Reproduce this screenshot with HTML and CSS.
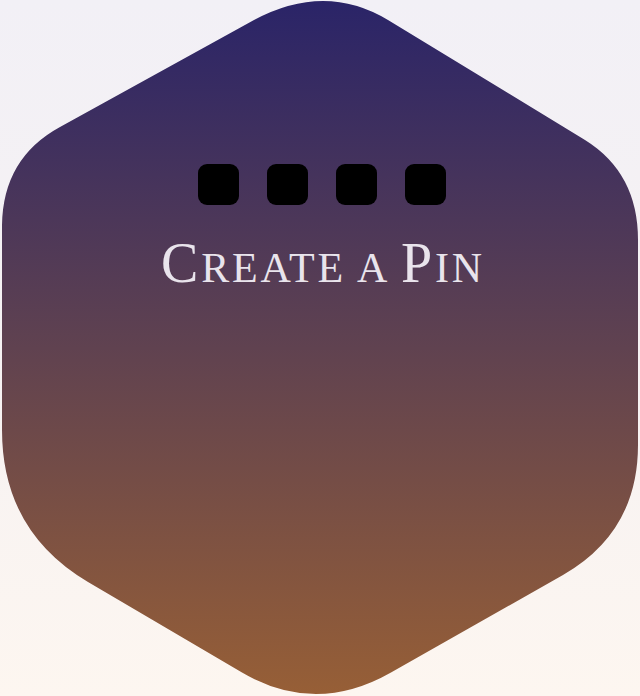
FILE: index.html
```html
<!DOCTYPE html>
<html lang="en">
<head>
<meta charset="utf-8">
<title>Create a Pin</title>
<link rel="stylesheet" href="styles.css">
</head>
<body>
<main class="stage">
  <section class="hex">
    <div class="pin-boxes">
      <span class="pin-box"></span>
      <span class="pin-box"></span>
      <span class="pin-box"></span>
      <span class="pin-box"></span>
    </div>
    <h1 class="title"><span class="cap">C</span>reate a <span class="cap">P</span>in</h1>
  </section>
</main>
</body>
</html>
```

FILE: styles.css
```css
html, body {
  margin: 0;
  padding: 0;
}

body {
  width: 640px;
  height: 696px;
  overflow: hidden;
  font-family: "Liberation Serif", "DejaVu Serif", serif;
}

.stage {
  width: 640px;
  height: 696px;
  background: linear-gradient(180deg, #f2f0f6 0%, #f6f2f3 50%, #fdf6f0 100%);
}

.hex {
  width: 640px;
  height: 696px;
  box-sizing: border-box;
  padding-top: 164px;
  display: flex;
  flex-direction: column;
  align-items: center;
  background: linear-gradient(180deg, #2a2468 0%, #604250 50%, #975f36 100%);
  clip-path: path("M254 20 Q325 -18 388 20 L585 140 Q638 173 638 240 L638 445 Q638 532 563 575 L391 672.5 Q315.5 715.5 242 672.5 L88 582 Q2 531 2 430 L2 225 Q3 158 60 127 Z");
}

.pin-boxes {
  display: flex;
  gap: 28px;
  margin-left: 4px;
}

.pin-box {
  width: 41px;
  height: 41px;
  border-radius: 9px;
  background: #000;
}

.title {
  margin: 26px 0 0 6px;
  font-family: "Liberation Serif", "DejaVu Serif", serif;
  font-weight: normal;
  text-transform: uppercase;
  font-size: 42px;
  line-height: 64px;
  letter-spacing: 2.8px;
  color: #e9e4ec;
}

.cap {
  font-size: 56px;
}
```
